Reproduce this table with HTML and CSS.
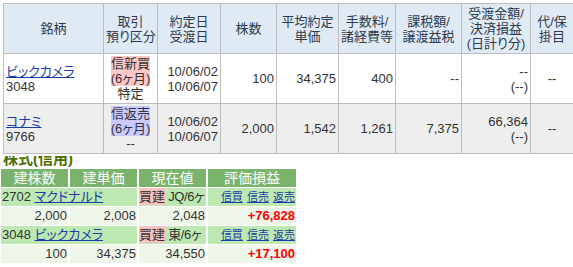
FILE: index.html
```html
<!DOCTYPE html>
<html lang="ja">
<head>
<meta charset="utf-8">
<link rel="stylesheet" href="styles.css">
</head>
<body>
<div class="upper">
<table class="pos">
<colgroup>
<col class="c1"><col class="c2"><col class="c3"><col class="c4"><col class="c5"><col class="c6"><col class="c7"><col class="c8"><col class="c9">
</colgroup>
<tr class="head">
<th>銘柄</th>
<th>取引<br>預り区分</th>
<th>約定日<br>受渡日</th>
<th>株数</th>
<th>平均約定<br>単価</th>
<th>手数料/<br>諸経費等</th>
<th>課税額/<br>譲渡益税</th>
<th>受渡金額/<br>決済損益<br>(日計り分)</th>
<th>代/保<br>掛目</th>
</tr>
<tr class="r1">
<td class="name"><a href="#">ビックカメラ</a><br>3048</td>
<td class="ctr"><span class="tag buy">信新買<br>(6ヶ月)</span><br>特定</td>
<td class="num">10/06/02<br>10/06/07</td>
<td class="num">100</td>
<td class="num">34,375</td>
<td class="num">400</td>
<td class="num">--</td>
<td class="num">--<br>(--)</td>
<td class="ctr">--</td>
</tr>
<tr class="r2">
<td class="name"><a href="#">コナミ</a><br>9766</td>
<td class="ctr"><span class="tag sell">信返売<br>(6ヶ月)</span><br>--</td>
<td class="num">10/06/02<br>10/06/07</td>
<td class="num">2,000</td>
<td class="num">1,542</td>
<td class="num">1,261</td>
<td class="num">7,375</td>
<td class="num">66,364<br>(--)</td>
<td class="ctr">--</td>
</tr>
</table>
</div>
<div class="title"><span>株式(信用)</span></div>
<table class="margin">
<colgroup><col class="g1"><col class="g2"><col class="g3"><col class="g4"></colgroup>
<tr class="ghead"><th>建株数</th><th>建単価</th><th>現在値</th><th>評価損益</th></tr>
<tr class="gname">
<td colspan="2">2702 <a href="#">マクドナルド</a></td>
<td class="mkt"><span class="kai">買建</span> JQ/6ヶ</td>
<td class="links"><a href="#">信買</a> <a href="#">信売</a> <a href="#">返売</a></td>
</tr>
<tr class="gval"><td>2,000</td><td>2,008</td><td>2,048</td><td class="pl">+76,828</td></tr>
<tr class="gname">
<td colspan="2">3048 <a href="#">ビックカメラ</a></td>
<td class="mkt"><span class="kai">買建</span> 東/6ヶ</td>
<td class="links"><a href="#">信買</a> <a href="#">信売</a> <a href="#">返売</a></td>
</tr>
<tr class="gval"><td>100</td><td>34,375</td><td>34,550</td><td class="pl">+17,100</td></tr>
</table>
</body>
</html>
```

FILE: styles.css
```css
html, body {
  margin: 0;
  padding: 0;
  background: #ffffff;
  font-family: "Liberation Sans", "Noto Sans CJK JP", sans-serif;
  font-size: 13px;
  color: #333333;
  font-feature-settings: "palt";
}
a {
  color: #1a3ca6;
  text-decoration: underline;
}
.upper {
  padding: 3px 0 0 3px;
}
.pos {
  border-collapse: collapse;
  table-layout: fixed;
  width: 570px;
}
.c1 { width: 100px; }
.c2 { width: 54px; }
.c3 { width: 63px; }
.c4 { width: 56px; }
.c5 { width: 62px; }
.c6 { width: 57px; }
.c7 { width: 66px; }
.c8 { width: 69px; }
.c9 { width: 43px; }
.pos th, .pos td {
  border: 1px solid #bcbcbc;
  line-height: 15px;
  padding: 0 2px;
  white-space: nowrap;
  overflow: hidden;
}
.pos th {
  background: #dfeaf5;
  font-weight: normal;
  color: #2f3a4c;
  height: 49px;
  text-align: center;
}
.pos td {
  height: 49px;
}
.r1 td { background: #ffffff; }
.r2 td { background: #eeeeee; }
.name { text-align: left; }
.ctr { text-align: center; }
.num { text-align: right; }
.tag {
  display: inline-block;
  vertical-align: top;
}
.buy { background: #ffc6c6; }
.sell { background: #c9c9ff; }
.title {
  height: 12px;
  overflow: hidden;
  padding-left: 3px;
  margin-top: 2px;
}
.title span {
  display: block;
  margin-top: -6px;
  font-size: 15px;
  line-height: 17px;
  font-weight: bold;
  color: #4d6c00;
}
.margin {
  border-collapse: separate;
  border-spacing: 2px 1px;
  table-layout: fixed;
  width: 299px;
  margin: 0 0 0 -1px;
}
.g1 { width: 67px; }
.g2 { width: 67px; }
.g3 { width: 67px; }
.g4 { width: 88px; }
.margin th, .margin td {
  height: 18px;
  padding: 0 1px;
  line-height: 18px;
  white-space: nowrap;
  overflow: hidden;
}
.ghead th {
  background: #7ab46c;
  color: #ffffff;
  font-weight: normal;
  font-size: 14px;
  text-align: center;
}
.gname td {
  background: #bde8b2;
}
.gname td.mkt {
  padding: 0;
  letter-spacing: -0.4px;
}
.gval td {
  background: #eef6ea;
  text-align: right;
}
.kai {
  background: #f9c2c2;
  padding: 1px 0;
  letter-spacing: 0;
}
.links {
  text-align: right;
  font-size: 11px;
}
.links a {
  margin-left: 1px;
}
.pl {
  color: #ff0000;
  font-weight: bold;
}
```
